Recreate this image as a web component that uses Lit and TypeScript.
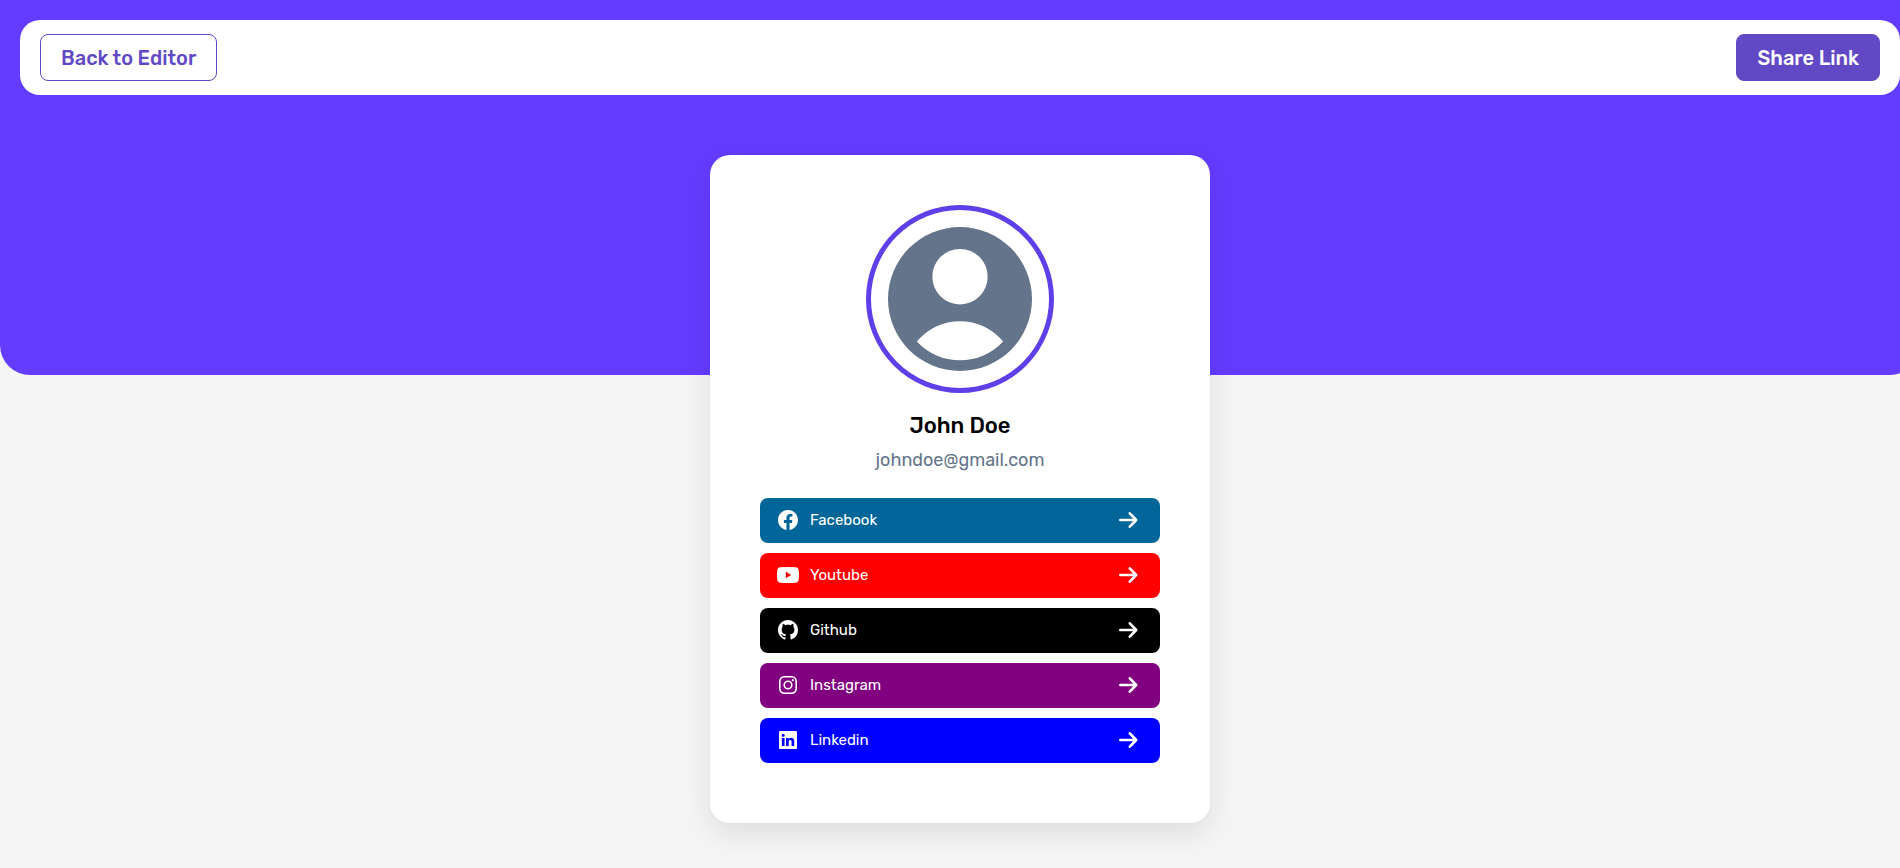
import { LitElement, html, css, svg } from "lit";
import { customElement } from "lit/decorators.js";

const FACEBOOK = html`<svg viewBox="0 0 16 16" width="20" height="20" fill="currentColor" aria-hidden="true"><path d="M16 8.049c0-4.446-3.582-8.05-8-8.05C3.58 0-.002 3.603-.002 8.05c0 4.017 2.926 7.347 6.75 7.951v-5.625h-2.03V8.05H6.75V6.275c0-2.017 1.195-3.131 3.022-3.131.876 0 1.791.157 1.791.157v1.98h-1.009c-.993 0-1.303.621-1.303 1.258v1.51h2.218l-.354 2.326H9.25V16c3.824-.604 6.75-3.934 6.75-7.951"/></svg>`;
const YOUTUBE = html`<svg viewBox="0 0 22 16" width="22" height="16" fill="currentColor" aria-hidden="true"><path fill-rule="evenodd" d="M3 .3Q11-.3 19 .3Q21.4.6 21.7 3Q22.3 8 21.7 13Q21.4 15.4 19 15.7Q11 16.3 3 15.7Q.6 15.4.3 13Q-.3 8 .3 3Q.6.6 3 .3ZM8.8 4.8V11.200L14.3 8Z"/></svg>`;
const GITHUB = html`<svg viewBox="0 0 16 16" width="20" height="20" fill="currentColor" aria-hidden="true"><path d="M8 0C3.58 0 0 3.58 0 8c0 3.54 2.29 6.53 5.47 7.59.4.07.55-.17.55-.38 0-.19-.01-.82-.01-1.49-2.01.37-2.53-.49-2.69-.94-.09-.23-.48-.94-.82-1.13-.28-.15-.68-.52-.01-.53.63-.01 1.08.58 1.23.82.72 1.21 1.87.87 2.33.66.07-.52.28-.87.51-1.07-1.78-.2-3.64-.89-3.64-3.95 0-.87.31-1.59.82-2.15-.08-.2-.36-1.02.08-2.12 0 0 .67-.21 2.2.82.64-.18 1.32-.27 2-.27s1.36.09 2 .27c1.53-1.04 2.2-.82 2.2-.82.44 1.1.16 1.92.08 2.12.51.56.82 1.27.82 2.15 0 3.07-1.87 3.75-3.65 3.95.29.25.54.73.54 1.48 0 1.07-.01 1.93-.01 2.2 0 .21.15.46.55.38A8.01 8.01 0 0 0 16 8c0-4.42-3.58-8-8-8"/></svg>`;
const INSTAGRAM = html`<svg viewBox="0 0 18 18" width="18" height="18" fill="none" stroke="currentColor" stroke-width="1.6" aria-hidden="true"><rect x=".8" y=".8" width="16.4" height="16.4" rx="4.6"/><circle cx="9" cy="9" r="3.8"/><circle cx="13.8" cy="4.2" r="1.1" fill="currentColor" stroke="none"/></svg>`;
const LINKEDIN = html`<svg viewBox="0 0 16 16" width="18" height="18" fill="currentColor" aria-hidden="true"><path d="M0 1.146C0 .513.526 0 1.175 0h13.65C15.474 0 16 .513 16 1.146v13.708c0 .633-.526 1.146-1.175 1.146H1.175C.526 16 0 15.487 0 14.854zm4.943 12.248V6.169H2.542v7.225zm-1.2-8.212c.837 0 1.358-.554 1.358-1.248-.015-.709-.52-1.248-1.342-1.248S2.4 3.226 2.4 3.934c0 .694.521 1.248 1.327 1.248zm4.908 8.212V9.359c0-.216.016-.432.08-.586.173-.431.568-.878 1.232-.878.869 0 1.216.662 1.216 1.634v3.865h2.401V9.25c0-2.22-1.184-3.252-2.764-3.252-1.274 0-1.845.7-2.165 1.193v.025h-.016l.016-.025V6.169h-2.4c.03.678 0 7.225 0 7.225z"/></svg>`;

const ARROW_PATH = svg`<path d="M1.3 10H17M10.8 3.300L17.200 10L10.8 16.700"/>`;

const LINKS = [
  { name: "Facebook", tone: "facebook", href: "#facebook", icon: FACEBOOK },
  { name: "Youtube", tone: "youtube", href: "#youtube", icon: YOUTUBE },
  { name: "Github", tone: "github", href: "#github", icon: GITHUB },
  { name: "Instagram", tone: "instagram", href: "#instagram", icon: INSTAGRAM },
  { name: "Linkedin", tone: "linkedin", href: "#linkedin", icon: LINKEDIN },
];

@customElement("profile-card")
class ProfileCard extends LitElement {
  static styles = css`
    :host {
      display: block;
      box-sizing: border-box;
      width: 500px;
      max-width: 100%;
      padding: 50px 50px 60px;
      border-radius: 20px;
      background: #fff;
      box-shadow: 0 10px 30px rgba(0, 0, 0, 0.1);
    }
    .avatar {
      box-sizing: border-box;
      display: flex;
      align-items: center;
      justify-content: center;
      width: 188px;
      height: 188px;
      margin: 0 auto;
      border: 5px solid #5f3fe8;
      border-radius: 50%;
      color: #64748b;
    }
    .name {
      margin: 20px 0 0;
      font-size: 22px;
      font-weight: 500;
      line-height: 26px;
      text-align: center;
      color: #000;
    }
    .email {
      margin: 10px 0 0;
      font-size: 18px;
      line-height: 22px;
      text-align: center;
      color: #64748b;
    }
    .links {
      display: grid;
      gap: 10px;
      margin: 27px 0 0;
      padding: 0;
      list-style: none;
    }
    .link {
      box-sizing: border-box;
      display: flex;
      align-items: center;
      gap: 10px;
      height: 45px;
      padding: 0 21px 1px 16px;
      border-radius: 8px;
      color: #fff;
      font-size: 15px;
      line-height: 20px;
      text-decoration: none;
    }
    .facebook { background: #006699; }
    .youtube { background: #ff0000; }
    .github { background: #000; }
    .instagram { background: #800080; }
    .linkedin { background: #0000ff; }
    .icon {
      display: flex;
      justify-content: center;
      width: 24px;
    }
    .label { flex: 1; }
    .arrow { display: block; }
  `;

  render() {
    return html`
      <div class="avatar">
        <svg viewBox="0 0 144 144" width="144" height="144" fill="currentColor" role="img" aria-label="Profile picture">
          <path fill-rule="evenodd" d="M72 0A72 72 0 1 1 72 144A72 72 0 1 1 72 0ZM72 22A27.7 27.7 0 1 0 72 77.4A27.7 27.7 0 1 0 72 22ZM28.8 114.600A59.3 59.3 0 0 0 115.2 114.600A56 56 0 0 0 28.8 114.600Z"/>
        </svg>
      </div>
      <h1 class="name">John Doe</h1>
      <p class="email">johndoe@gmail.com</p>
      <ul class="links">
        ${LINKS.map(
          (link) => html`<li>
            <a class="link ${link.tone}" href=${link.href}>
              <span class="icon">${link.icon}</span>
              <span class="label">${link.name}</span>
              <svg class="arrow" viewBox="0 0 20 20" width="20" height="20" fill="none" stroke="currentColor" stroke-width="2.6" stroke-linecap="round" stroke-linejoin="round" aria-hidden="true">${ARROW_PATH}</svg>
            </a>
          </li>`
        )}
      </ul>
    `;
  }
}

@customElement("app-root")
class AppRoot extends LitElement {
  static styles = css`
    :host {
      display: block;
      min-height: 100vh;
      overflow: hidden;
      background: #f5f5f5;
      font-family: Rubik, Roboto, "Liberation Sans", sans-serif;
    }
    .page {
      display: grid;
      grid-template-rows: 375px auto;
      width: calc(100% + 20px);
      padding-bottom: 45px;
    }
    .banner {
      grid-area: 1 / 1;
      border-radius: 0 0 30px 30px;
      background: #633cff;
    }
    .content {
      grid-area: 1 / 1 / 3 / 2;
      display: flex;
      flex-direction: column;
      align-items: center;
      gap: 60px;
      padding: 20px 20px 0;
    }
    .bar {
      box-sizing: border-box;
      display: flex;
      align-items: center;
      justify-content: space-between;
      width: 100%;
      padding: 14px 20px;
      border-radius: 20px;
      background: #fff;
    }
    .button {
      height: 47px;
      padding: 0 20px;
      border: 1px solid #6149c6;
      border-radius: 8px;
      background: #fff;
      color: #6149c6;
      font-family: inherit;
      font-size: 20px;
      font-weight: 500;
      line-height: 24px;
      cursor: pointer;
    }
    .primary {
      background: #6149c6;
      color: #fff;
    }
  `;

  render() {
    return html`
      <div class="page">
        <div class="banner"></div>
        <div class="content">
          <header class="bar">
            <button class="button" type="button">Back to Editor</button>
            <button class="button primary" type="button">Share Link</button>
          </header>
          <profile-card></profile-card>
        </div>
      </div>
    `;
  }
}
